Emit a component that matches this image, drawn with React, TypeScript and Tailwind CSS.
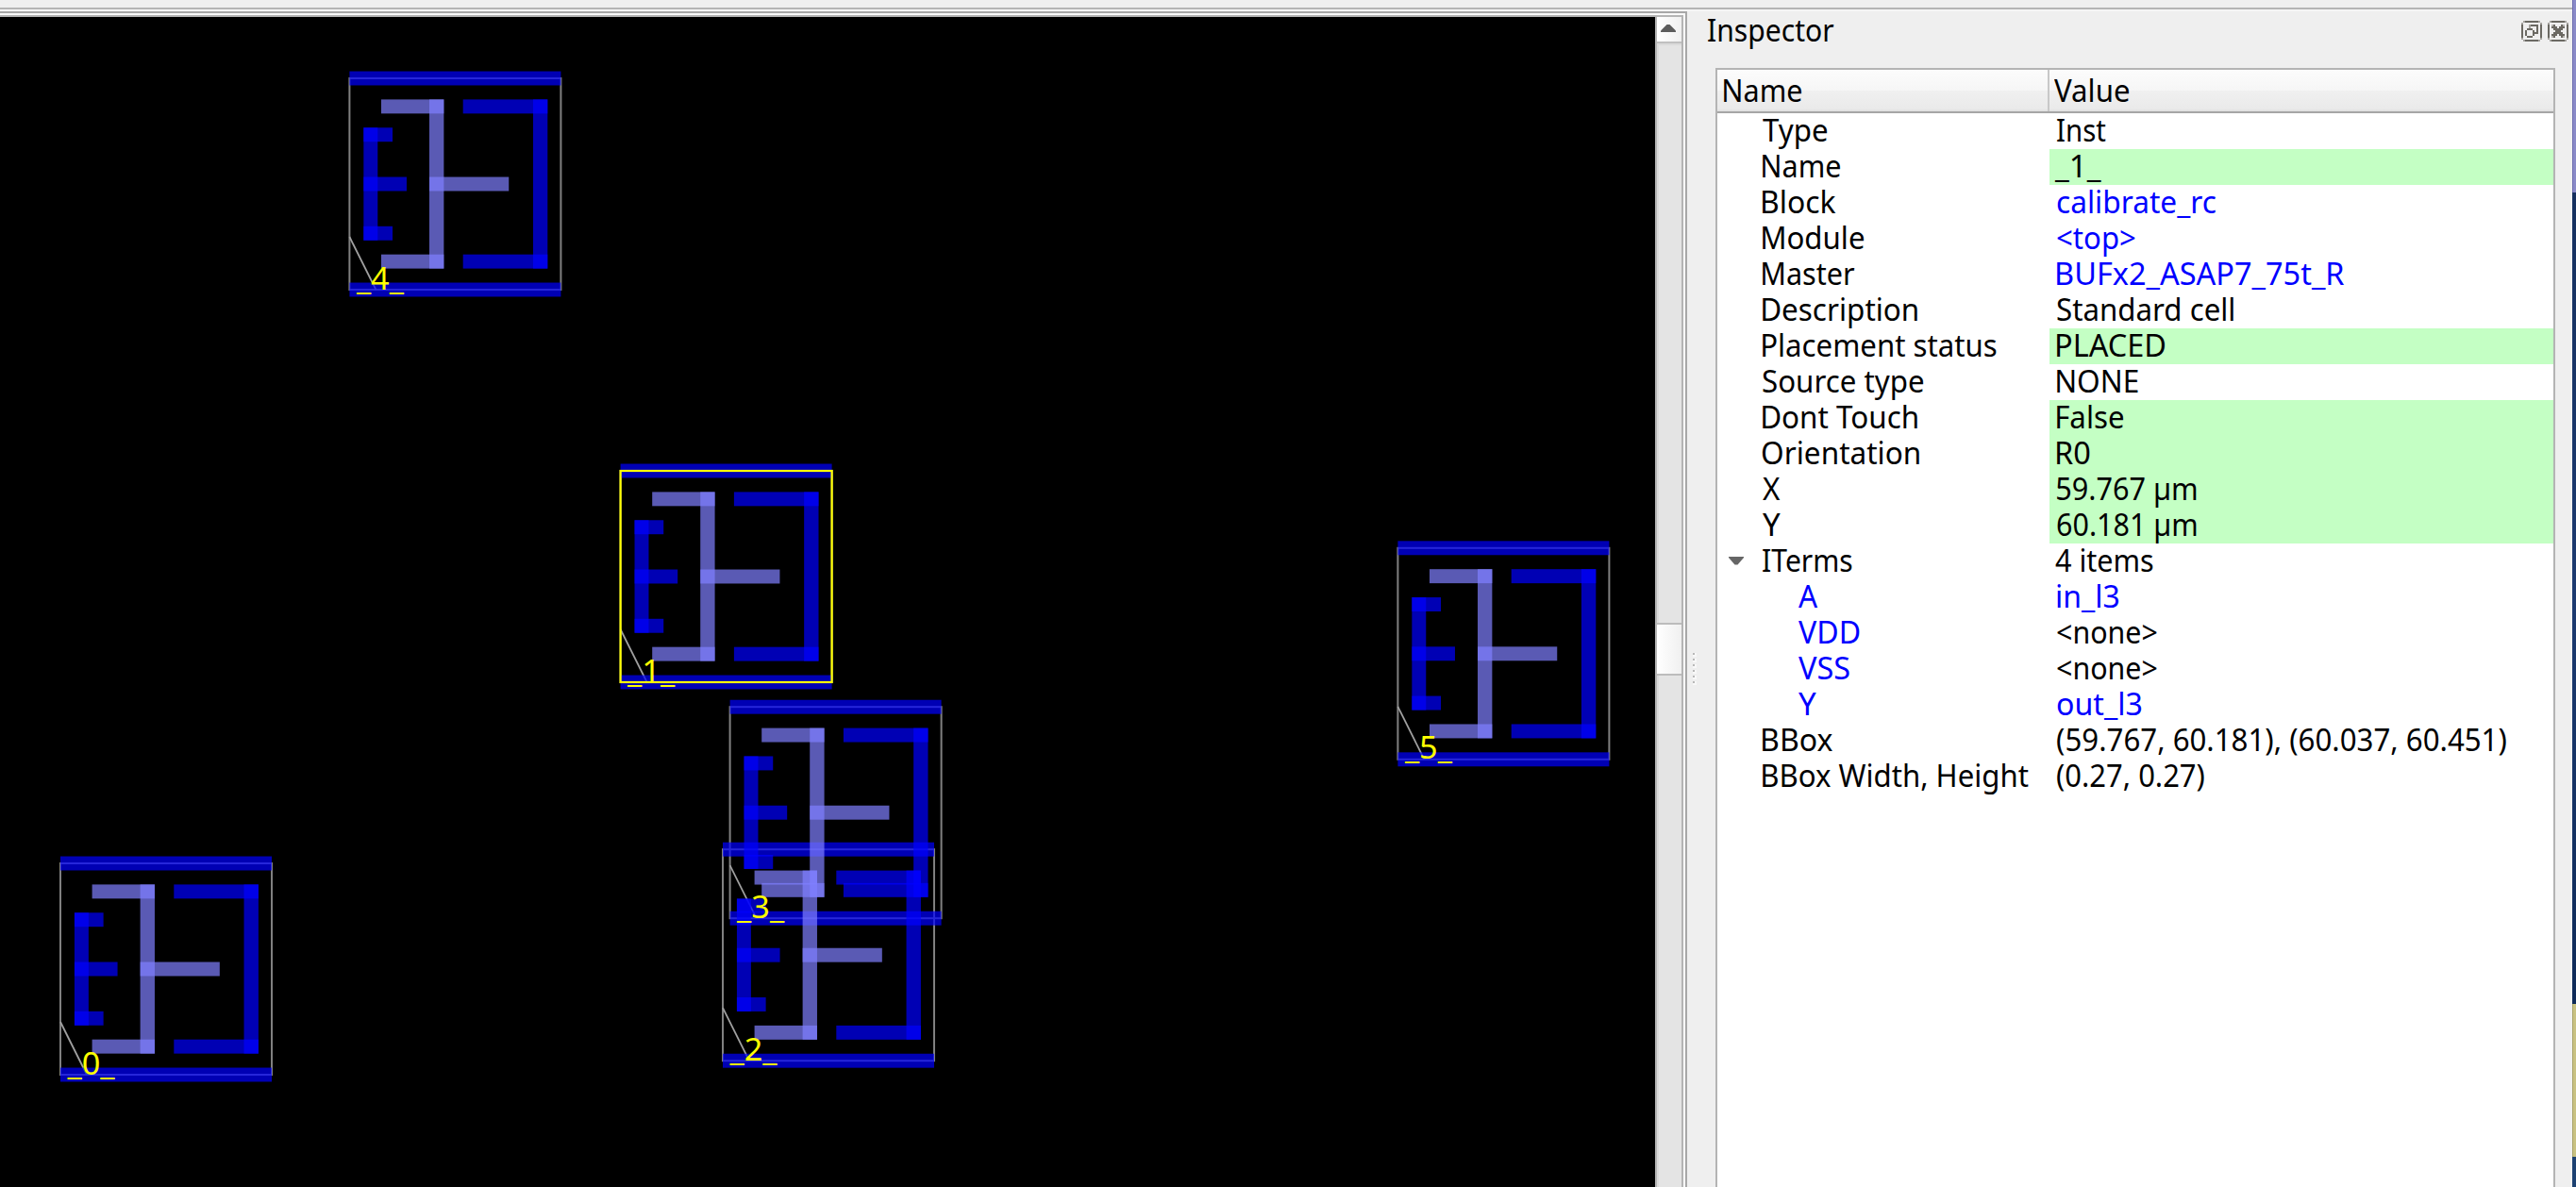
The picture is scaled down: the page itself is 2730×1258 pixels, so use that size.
import { useLayoutEffect, useRef, useState } from "react";

type Box = [number, number, number, number];

/* Standard-cell geometry in nanometres: x1, y1, x2, y2 */
const CELL = 224;
const SCALE = CELL / 270;

const METAL: Box[] = [
  [0, -9, 270, 9],
  [0, 261, 270, 279],
  [18, 63, 36, 207],
  [18, 63, 55, 81],
  [18, 126, 73, 144],
  [18, 189, 55, 207],
  [145, 27, 253, 45],
  [145, 225, 253, 243],
  [234.5, 27, 253, 243],
];

const PINS: Box[] = [
  [40.5, 27, 120.5, 45],
  [40.5, 225, 120.5, 243],
  [102, 27, 120.5, 243],
  [102, 126, 203.5, 144],
];

const INSTANCES = [
  { id: 0, x: 64, y: 915 },
  { id: 1, x: 657.6, y: 499, selected: true },
  { id: 2, x: 766, y: 900.2 },
  { id: 3, x: 773.6, y: 749.2 },
  { id: 4, x: 370.4, y: 83 },
  { id: 5, x: 1481.4, y: 580.8 },
];

function Shapes({ boxes, fill }: { boxes: Box[]; fill: string }) {
  return (
    <g fill={fill} fillOpacity={0.706}>
      {INSTANCES.map((inst) =>
        boxes.map(([x1, y1, x2, y2], i) => (
          <rect
            key={`${inst.id}-${i}`}
            x={inst.x + x1 * SCALE}
            y={inst.y + y1 * SCALE}
            width={(x2 - x1) * SCALE}
            height={(y2 - y1) * SCALE}
          />
        )),
      )}
    </g>
  );
}

function LayoutCanvas() {
  return (
    <svg className="block h-[1240px] w-[1754px] bg-black" viewBox="0 18 1754 1240">
      <g fill="none" stroke="#808080" strokeWidth={2}>
        {INSTANCES.map((i) => (
          <g key={i.id}>
            <rect x={i.x} y={i.y} width={CELL} height={CELL} />
            <line x1={i.x} y1={i.y + 168} x2={i.x + 28} y2={i.y + CELL} stroke="#a0a0a0" strokeWidth={1.8} />
          </g>
        ))}
      </g>
      <Shapes boxes={METAL} fill="#0000ff" />
      <Shapes boxes={PINS} fill="#8080ff" />
      {INSTANCES.filter((i) => i.selected).map((i) => (
        <rect key={i.id} x={i.x} y={i.y} width={CELL} height={CELL} fill="none" stroke="#ffff00" strokeWidth={2.2} />
      ))}
      <g fill="#ffff00" fontFamily="'Noto Sans', sans-serif" fontSize={33}>
        {INSTANCES.map((i) => (
          <text key={i.id} x={i.x + 7.5} y={i.y + 223.6} textLength={50} lengthAdjust="spacingAndGlyphs">
            {`_${i.id}_`}
          </text>
        ))}
      </g>
    </svg>
  );
}

/* Text whose inked width is fitted to `w` pixels. */
function Fit({ text, w }: { text: string; w: number }) {
  const ref = useRef<HTMLSpanElement>(null);
  const [transform, setTransform] = useState("none");
  useLayoutEffect(() => {
    const ctx = document.createElement("canvas").getContext("2d");
    if (!ctx || !ref.current) return;
    const cs = getComputedStyle(ref.current);
    ctx.font = `${cs.fontSize} ${cs.fontFamily}`;
    const m = ctx.measureText(text);
    const k = w / (m.actualBoundingBoxRight + m.actualBoundingBoxLeft);
    setTransform(`translateX(${m.actualBoundingBoxLeft * k}px) scaleX(${k})`);
  }, [text, w]);
  return (
    <span ref={ref} className="inline-block origin-left whitespace-pre" style={{ transform }}>
      {text}
    </span>
  );
}

interface Row {
  name: string;
  nw: number;
  value: string;
  vw: number;
  editable?: boolean;
  link?: boolean;
  child?: boolean;
  open?: boolean;
}

const ROWS: Row[] = [
  { name: "Type", nw: 68, value: "Inst", vw: 52 },
  { name: "Name", nw: 82, value: "_1_", vw: 50, editable: true },
  { name: "Block", nw: 78, value: "calibrate_rc", vw: 168, link: true },
  { name: "Module", nw: 107, value: "<top>", vw: 83, link: true },
  { name: "Master", nw: 98, value: "BUFx2_ASAP7_75t_R", vw: 305, link: true },
  { name: "Description", nw: 164, value: "Standard cell", vw: 187 },
  { name: "Placement status", nw: 248, value: "PLACED", vw: 115, editable: true },
  { name: "Source type", nw: 170, value: "NONE", vw: 86 },
  { name: "Dont Touch", nw: 164, value: "False", vw: 70, editable: true },
  { name: "Orientation", nw: 166, value: "R0", vw: 35, editable: true },
  { name: "X", nw: 19, value: "59.767 µm", vw: 148, editable: true },
  { name: "Y", nw: 19, value: "60.181 µm", vw: 148, editable: true },
  { name: "ITerms", nw: 95, value: "4 items", vw: 104, open: true },
  { name: "A", nw: 21, value: "in_l3", vw: 65, link: true, child: true },
  { name: "VDD", nw: 65, value: "<none>", vw: 106, child: true },
  { name: "VSS", nw: 54, value: "<none>", vw: 106, child: true },
  { name: "Y", nw: 19, value: "out_l3", vw: 89, link: true, child: true },
  { name: "BBox", nw: 74, value: "(59.767, 60.181), (60.037, 60.451)", vw: 476 },
  { name: "BBox Width, Height", nw: 282, value: "(0.27, 0.27)", vw: 156 },
];

function TreeRow({ row }: { row: Row }) {
  return (
    <div className="flex h-[38px] leading-[36px]">
      <div className="flex w-[352px] shrink-0">
        <div className="flex w-[48px] shrink-0 pt-[14px] pl-[12px]">
          {row.open && (
            <svg className="h-[9px] w-[16px]" viewBox="0 0 16 9">
              <path d="M0 0h16v1L9.500 8.500h-3L0 1z" fill="#666" />
            </svg>
          )}
        </div>
        <div className={row.child ? "pl-[38px] text-[#0000ff]" : ""}>
          <Fit text={row.name} w={row.nw} />
        </div>
      </div>
      <div
        className={`flex-1 ${row.value === "_1_" ? "pl-[5px]" : row.value === "4 items" ? "pl-[6px]" : "pl-[8px]"} ${row.editable ? "bg-[#c4ffc4]" : ""} ${row.link ? "text-[#0000ff]" : ""}`}
      >
        <Fit text={row.value} w={row.vw} />
      </div>
    </div>
  );
}

function IconFrame() {
  return (
    <>
      <path d="M2 .5h7M2 10.500h7M.5 2v7M10.500 2v7" stroke="#6b6963" />
      <path d="M1 0h1v1h-1v1h-1v-1h1zM9 0h1v1h1v1h-1v-1h-1zM0 9h1v1h1v1h-1v-1h-1zM10 9h1v1h-1v1h-1v-1h1z" fill="#a5a39f" />
    </>
  );
}

function FloatIcon() {
  return (
    <svg className="size-[22px]" viewBox="0 0 11 11" fill="none" shapeRendering="crispEdges">
      <IconFrame />
      <path d="M3 4.500h3M3 8.500h3M2.500 5v3M6.500 5v3M5 2.500h4M8.500 3v4M7 6.500h1" stroke="#6b6963" />
      <path d="M4 2h1v2h-1z" fill="#a5a39f" />
    </svg>
  );
}

function CloseIcon() {
  return (
    <svg className="size-[22px]" viewBox="0 0 11 11" fill="none" shapeRendering="crispEdges">
      <IconFrame />
      <path d="M3 2h1v1h1v1h1v-1h1v-1h1v1h1v1h-1v1h-1v1h1v1h1v1h-1v1h-1v-1h-1v-1h-1v1h-1v1h-1v-1h-1v-1h1v-1h1v-1h-1v-1h-1v-1h1z" fill="#6b6963" />
      <path d="M2 2h1v1h-1zM8 2h1v1h-1zM2 8h1v1h-1zM8 8h1v1h-1z" fill="#b5b3af" />
    </svg>
  );
}

function ScrollBar() {
  return (
    <div className="flex w-[28px] flex-col border-l-2 border-[#b4b4b4] bg-[#e4e4e4]">
      <div className="flex h-[28px] justify-center border-b-2 border-[#c0c0c0] bg-linear-to-r from-white to-[#f0f0f0] pt-[8px] pr-[2px]">
        <svg className="h-[8px] w-[16px]" viewBox="0 0 16 8">
          <path d="M0 8V6.500L6.500 0h3L16 6.500V8z" fill="#5c5c5c" />
        </svg>
      </div>
      <div className="h-[614px] border-t-2 border-l-2 border-[#dadada]" />
      <div className="h-[56px] border-y-2 border-[#bcbcbc] bg-linear-to-r from-white to-[#f0f0f0]" />
      <div className="flex-1 border-l-2 border-[#dadada]" />
    </div>
  );
}

export default function App() {
  return (
    <div className="flex h-[1258px] w-[2730px] overflow-hidden bg-[#efefef] font-['Noto_Sans',sans-serif] text-[33px] text-black">
      <div className="flex w-[2726px] flex-col">
        <div className="h-[12px] shrink-0 border-b-2 border-[#f5f5f5]">
          <div className="h-[10px] border-b-2 border-[#b4b4b4]" />
        </div>
        <div className="flex h-[1246px]">
          <div className="w-[1788px] border-t-2 border-r-2 border-[#a8a8a8] bg-[#f9f9f9] pt-[2px] pr-[2px]">
            <div className="flex h-[1242px] border-t-2 border-r-2 border-[#b4b4b4]">
              <LayoutCanvas />
              <ScrollBar />
            </div>
          </div>
          <div className="flex w-[30px] flex-col gap-[2px] pt-[680px] pl-[6px]">
            {[0, 1, 2, 3, 4, 5].map((n) => (
              <div key={n} className="size-[4px] border-r-2 border-b-2 border-[#f8f8f8] bg-[#b8b8b8]" />
            ))}
          </div>
          <div className="flex w-[908px] flex-col">
            <div className="flex h-[60px] justify-between">
              <div className="-ml-[8px] h-[40px] leading-[40px]">
                <Fit text="Inspector" w={134} />
              </div>
              <div className="mr-[4px] flex shrink-0 gap-[6px] pt-[10px]">
                <FloatIcon />
                <CloseIcon />
              </div>
            </div>
            <div className="flex w-[890px] flex-1 flex-col border-x-2 border-t-2 border-[#b4b4b4] bg-white">
              <div className="flex h-[46px] shrink-0 border-b-2 border-[#a6a6a6] bg-[linear-gradient(#fcfcfc,#f6f6f6_50%,#f0f0f0_50%,#eaeaea_94%,#dedede)] leading-[44px]">
                <div className="w-[352px] border-r-2 border-[#c8c8c8] pl-[7px]">
                  <Fit text="Name" w={82} />
                </div>
                <div className="pl-[5px]">
                  <Fit text="Value" w={79} />
                </div>
              </div>
              {ROWS.map((row, i) => (
                <TreeRow key={i} row={row} />
              ))}
            </div>
          </div>
        </div>
      </div>
      <div className="flex w-[4px] flex-col">
        <div className="h-[204px] border-l border-[#6c6cae] bg-[#8a8ac8]" />
        <div className="h-[860px] bg-linear-to-b from-[#16305f] via-[#1c3a70] to-[#0e2a58]" />
        <div className="h-[162px] border-l border-[#a8a26a] bg-[#c9c282]" />
        <div className="flex-1 bg-[#1d4172]" />
      </div>
    </div>
  );
}
